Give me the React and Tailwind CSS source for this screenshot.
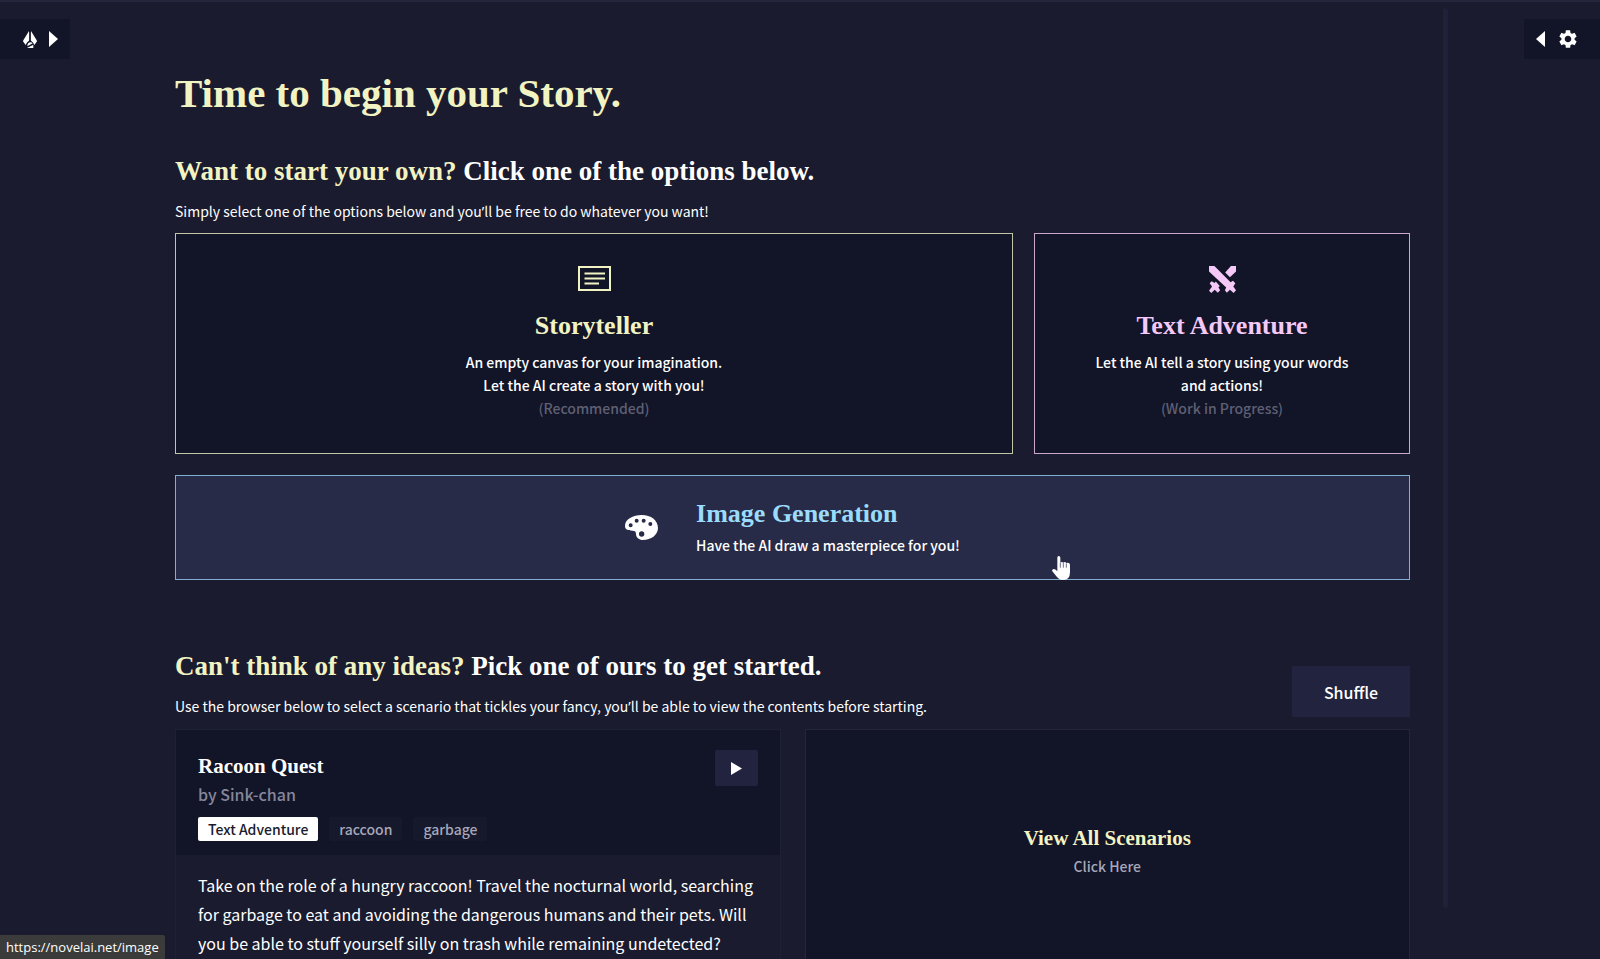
import React from 'react';
import { MdSettings } from 'react-icons/md';

const tags = ['raccoon', 'garbage'];

const PenIcon = () => (
  <svg viewBox="0 0 42 51" className="w-[14px] h-[17px]" fill="currentColor" aria-hidden="true">
    <path d="M18 0 L1 28 Q-1 31 2 34 L8 42 Q11 33 18 29 Z" />
    <path d="M24 0 L41 28 Q43 31 40 34 L34 42 Q31 33 24 29 Z" />
    <path d="M21 34 Q27 34 29 37 L13 46 Q13 36 21 34 Z" />
    <path d="M31 41 L31 51 L12 51 Z" />
    <path d="M20 4 h2 v24 h-2 Z" opacity="0.4" />
  </svg>
);

const TriangleIcon = ({ className }) => (
  <svg viewBox="0 0 9 16" preserveAspectRatio="none" className={className} fill="currentColor" aria-hidden="true">
    <path d="M0 0 L9 8 L0 16 Z" />
  </svg>
);

const StoryIcon = () => (
  <svg viewBox="0 0 33 25" className="w-[33px] h-[25px]" fill="none" stroke="currentColor" strokeWidth="2" aria-hidden="true">
    <path d="M1 1 H32 V24 H1 Z" />
    <path d="M6.500 7.500 H27 M6.500 12.500 H27 M6.500 17.500 H21" strokeWidth="1.800" />
  </svg>
);

const SwordsIcon = () => (
  <svg viewBox="0 0 80 80" className="w-[27px] h-[27px]" fill="currentColor" aria-hidden="true">
    <path d="M0 0 H16 L64 48 L71 44 L78 51 L72 61 L80 72 L73 80 L62 70 L53 79 L47 72 L51 64 L0 16 Z" />
    <path d="M80 0 V16 L62 33 L48 19 L65 0 Z" />
    <path d="M2 51 L8 45 L17 50 L20 46 L32 59 L28 63 L33 72 L26 79 L17 70 L7 80 L0 73 L9 61 Z" />
  </svg>
);

const PaletteIcon = () => (
  <svg viewBox="0 0 99 75" className="w-[33px] h-[25px]" fill="currentColor" aria-hidden="true">
    <path
      fillRule="evenodd"
      d="M0 33 C0 12 24 0 50 0 C78 0 99 16 99 39 C99 60 78 75 54 75 C42 75 33 68 33 57 C33 50 30 47 22 47 C8 47 0 43 0 33 Z
        M11 31 a6 6 0 1 0 12 0 a6 6 0 1 0 -12 0 Z
        M29 17 a6 6 0 1 0 12 0 a6 6 0 1 0 -12 0 Z
        M50 17 a6 6 0 1 0 12 0 a6 6 0 1 0 -12 0 Z
        M70 27 a6 6 0 1 0 12 0 a6 6 0 1 0 -12 0 Z
        M42 57 a8 8 0 1 0 16 0 a8 8 0 1 0 -16 0 Z"
    />
  </svg>
);

const HandPointer = ({ className }) => (
  <svg viewBox="0 0 54 72" className={className} fill="currentColor" aria-hidden="true">
    <path d="M16 5 Q16 0 20 0 Q25 0 25 5 V20 Q29 16 34 20 Q39 16 43 21 Q54 19 54 27 V48 Q54 72 33 72 Q21 72 13 61 L1 46 Q-1 40 5 39 Q10 39 16 46 Z" />
    <path d="M25 20 V35 M34 21 V35 M43 22 V35" stroke="#272b47" strokeWidth="2" />
  </svg>
);

const SectionHeading = ({ accent, children, text }) => (
  <div>
    <h2 className="font-['Liberation_Serif',serif] text-[27px] leading-8 font-bold">
      <span className="text-[#f2f3c2]">{accent}</span> {children}
    </h2>
    <p className="mt-[13px] text-[14px] leading-[22px]">{text}</p>
  </div>
);

// The CJK face draws this mark full width, so it is taken from Noto Sans
const Apostrophe = () => <span className="font-['Noto_Sans',sans-serif] leading-none">’</span>;

const ModeCard = ({ icon, title, note, color, children }) => (
  <button className={`flex flex-col items-center border bg-[#121428] px-14 pt-8 pb-[33px] ${color}`}>
    <span className="flex h-8 items-start">{icon}</span>
    <span className="mt-3 font-['Liberation_Serif',serif] text-[26px] leading-8 font-bold">{title}</span>
    <span className="mt-[9px] text-[14px] leading-[23px] font-medium text-white">
      {children}
      <span className="block text-[#5f6073]">{note}</span>
    </span>
  </button>
);

const App = () => {
  return (
    <div className="h-screen overflow-hidden border-t-2 border-[#25263b] bg-[#1a1b2e] font-['Noto_Sans_CJK_SC','Noto_Sans',sans-serif] text-white">
      <div className="flex h-full items-start">
        <aside className="w-[142px] shrink-0 pt-[17px]">
          <button aria-label="Open library" className="flex h-10 w-[70px] items-center gap-3 bg-[#121428] pl-[23px]">
            <PenIcon />
            <TriangleIcon className="h-4 w-[9px]" />
          </button>
        </aside>

        <main className="min-w-0 flex-1 px-[33px] pt-[67px]">
          <h1 className="font-['Liberation_Serif',serif] text-[41px] leading-[48px] font-bold text-[#f2f3c2]">
            Time to begin your Story.
          </h1>

          <section className="mt-[38px]">
            <SectionHeading
              accent="Want to start your own?"
              text={<>Simply select one of the options below and you<Apostrophe />ll be free to do whatever you want!</>}
            >
              Click one of the options below.
            </SectionHeading>

            <div className="mt-[11px] grid grid-cols-[838fr_376fr] gap-[21px]">
              <ModeCard icon={<StoryIcon />} title="Storyteller" note="(Recommended)" color="border-[#c3c6a4] text-[#f2f3c2]">
                An empty canvas for your imagination.
                <br />
                Let the AI create a story with you!
              </ModeCard>
              <ModeCard icon={<SwordsIcon />} title="Text Adventure" note="(Work in Progress)" color="border-[#c9a8cf] text-[#f5c9f7]">
                Let the AI tell a story using your words and actions!
              </ModeCard>

              <button className="relative col-span-2 flex h-[105px] items-center justify-center gap-[38px] border border-[#7fb0d2] bg-[#272b47]">
                <PaletteIcon />
                <span className="flex flex-col items-start pt-[2px] text-left">
                  <span className="font-['Liberation_Serif',serif] text-[26px] leading-8 font-bold text-[#9bdcfc]">
                    Image Generation
                  </span>
                  <span className="text-[14px] leading-[30px] font-medium">Have the AI draw a masterpiece for you!</span>
                </span>
                {/* Pointer resting on the hovered card */}
                <HandPointer className="absolute top-[80px] right-[339px] h-6 w-[18px]" />
              </button>
            </div>
          </section>

          <section className="mt-[70px]">
            <div className="flex items-end justify-between">
              <SectionHeading
                accent="Can't think of any ideas?"
                text={<>Use the browser below to select a scenario that tickles your fancy, you<Apostrophe />ll be able to view the contents before starting.</>}
              >
                Pick one of ours to get started.
              </SectionHeading>
              <button className="h-[51px] w-[118px] bg-[#22243f] text-[16px] leading-6 font-medium">Shuffle</button>
            </div>

            <div className="mt-3 grid grid-cols-2 gap-6">
              <article className="border border-[#1e2036]">
                <div className="flex items-start justify-between bg-[#121428] px-[22px] pt-5 pb-[14px]">
                  <div>
                    <h3 className="font-['Liberation_Serif',serif] text-[21px] leading-8 font-bold">Racoon Quest</h3>
                    <p className="text-[16px] leading-6 font-medium text-[#86879a]">by Sink-chan</p>
                    <div className="mt-[11px] flex gap-[11px] text-[14px] leading-6 font-medium">
                      <span className="rounded-xs bg-white px-[10px] text-[#1a1b2e]">Text Adventure</span>
                      {tags.map((tag) => (
                        <span key={tag} className="rounded-xs bg-[#16182c] px-[10px] text-[#a6a7b8]">{tag}</span>
                      ))}
                    </div>
                  </div>
                  <button aria-label="Play Racoon Quest" className="flex h-9 w-[43px] items-center justify-center rounded-xs bg-[#22243f]">
                    <TriangleIcon className="h-[13px] w-[11px]" />
                  </button>
                </div>
                <p className="px-[22px] pt-4 text-[16px] leading-[29px]">
                  Take on the role of a hungry raccoon! Travel the nocturnal world, searching for garbage to eat and
                  avoiding the dangerous humans and their pets. Will you be able to stuff yourself silly on trash while
                  remaining undetected?
                </p>
              </article>

              <button className="flex h-[246px] flex-col items-center border border-[#25263b] bg-[#121428] pt-[92px]">
                <span className="font-['Liberation_Serif',serif] text-[21px] leading-8 font-bold text-[#f2f3c2]">
                  View All Scenarios
                </span>
                <span className="text-[14px] leading-6 font-medium text-[#a6a7b8]">Click Here</span>
              </button>
            </div>
          </section>
        </main>

        {/* Scroll track */}
        <div className="mt-[6px] h-[94%] w-[5px] shrink-0 rounded-full bg-[#1f2138]" />

        <aside className="flex w-[152px] shrink-0 justify-end pt-[17px]">
          <button aria-label="Open settings" className="flex h-10 w-[76px] items-center gap-[12px] bg-[#121428] pl-3">
            <TriangleIcon className="h-4 w-[9px] rotate-180" />
            <MdSettings className="size-[22px]" />
          </button>
        </aside>
      </div>

      <div className="fixed bottom-0 left-0 rounded-tr-xs bg-[#3b3b3b] px-[6px] font-['Open_Sans',sans-serif] text-[13px] leading-6">
        https://novelai.net/image
      </div>
    </div>
  );
};

export default App;
